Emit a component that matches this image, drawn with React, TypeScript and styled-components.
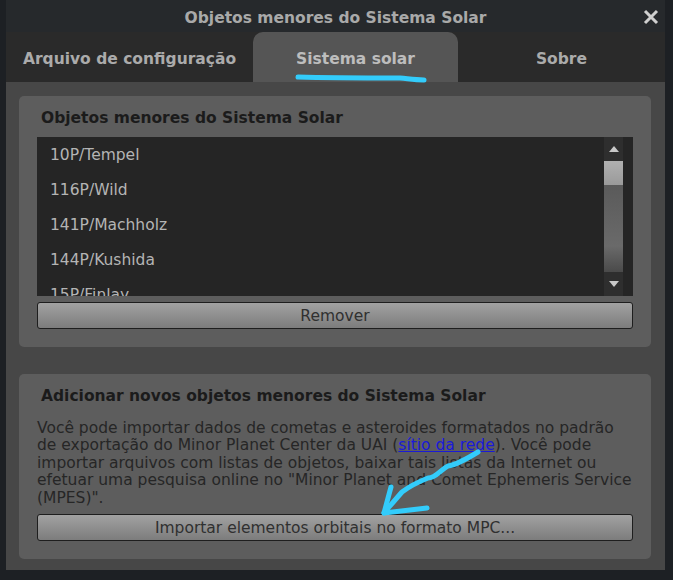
import styled, { createGlobalStyle } from "styled-components";

const GlobalStyle = createGlobalStyle`
  html, body {
    margin: 0;
    padding: 0;
    background: #1d2024;
    font-family: "DejaVu Sans", "Liberation Sans", sans-serif;
  }
`;

const Page = styled.div`
  position: relative;
  width: 673px;
  height: 580px;
  overflow: hidden;
`;

const Dialog = styled.div`
  margin-left: 6px;
  width: 659px;
  height: 570px;
  display: flex;
  flex-direction: column;
  background: #474747;
`;

const TitleBar = styled.div`
  height: 32px;
  padding-top: 4px;
  box-sizing: border-box;
  display: flex;
  align-items: center;
  justify-content: center;
  position: relative;
  background: #26292c;
  color: #a9a9a9;
  font-size: 15.5px;
  font-weight: bold;
`;

const Close = styled.div`
  position: absolute;
  right: 6px;
  top: 9px;
  width: 16px;
  height: 16px;
`;

const Tabs = styled.div`
  height: 50px;
  display: grid;
  grid-template-columns: 247px 205px 1fr;
  background: #2a2a2a;
`;

const Tab = styled.div<{ $active?: boolean }>`
  display: flex;
  align-items: center;
  justify-content: center;
  padding-top: 5px;
  border-radius: 10px 10px 0 0;
  background: ${(p) => (p.$active ? "#555555" : "transparent")};
  color: ${(p) => (p.$active ? "#bdbdbd" : "#ababab")};
  font-size: 15.5px;
  font-weight: bold;
`;

const Content = styled.div`
  flex: 1;
  display: flex;
  flex-direction: column;
  gap: 27px;
  padding: 14px 14px 11px 13px;
`;

const Group = styled.div`
  background: #5d5d5d;
  border-radius: 5px;
  padding: 12px 18px 18px 18px;
  display: flex;
  flex-direction: column;
`;

const GroupTitle = styled.div`
  height: 20px;
  line-height: 20px;
  padding-left: 4px;
  font-size: 15.5px;
  font-weight: bold;
  color: #1b1b1b;
`;

const List = styled.div`
  margin-top: 9px;
  height: 159px;
  background: #252525;
  display: flex;
  overflow: hidden;
`;

const Items = styled.div`
  flex: 1;
  padding: 1px 0 0 13px;
`;

const Item = styled.div`
  height: 35px;
  line-height: 35px;
  font-size: 15.5px;
  color: #b4b4b4;
  white-space: nowrap;
`;

const ScrollBar = styled.div`
  width: 19px;
  margin-right: 10px;
  display: flex;
  flex-direction: column;
  background: #2e2e2e;
`;

const Arrow = styled.div`
  height: 24px;
  display: flex;
  align-items: center;
  justify-content: center;
`;

const Thumb = styled.div`
  height: 24px;
  background: linear-gradient(#b0b0b0, #9a9a9a);
`;

const Track = styled.div`
  flex: 1;
  background: linear-gradient(#5a5a5a, #6a6a6a 70%, #4a4a4a);
`;

const Button = styled.div<{ $top: number }>`
  margin-top: ${(p) => p.$top}px;
  height: 24px;
  box-sizing: content-box;
  padding-top: 1px;
  border: 1px solid #1e1e1e;
  border-radius: 3px;
  background: linear-gradient(#a2a2a2, #7c7c7c);
  color: #303030;
  font-size: 15.5px;
  display: flex;
  align-items: center;
  justify-content: center;
`;

const Paragraph = styled.p`
  margin: 14px 0 0 0;
  font-size: 15.5px;
  line-height: 17.5px;
  color: #262626;
`;

const Link = styled.a`
  color: #1a1ad8;
  text-decoration: underline;
`;

const Annotation = styled.svg`
  position: absolute;
  left: 0;
  top: 0;
  pointer-events: none;
`;

const items = ["10P/Tempel", "116P/Wild", "141P/Machholz", "144P/Kushida", "15P/Finlay"];

export default function App() {
  return (
    <Page>
      <GlobalStyle />
      <Dialog>
        <TitleBar>
          Objetos menores do Sistema Solar
          <Close>
            <svg width="16" height="16" viewBox="0 0 16 16">
              <path d="M2 2 L14 14 M14 2 L2 14" stroke="#cfcfcf" strokeWidth="3" />
            </svg>
          </Close>
        </TitleBar>
        <Tabs>
          <Tab>Arquivo de configuração</Tab>
          <Tab $active>Sistema solar</Tab>
          <Tab>Sobre</Tab>
        </Tabs>
        <Content>
          <Group>
            <GroupTitle>Objetos menores do Sistema Solar</GroupTitle>
            <List>
              <Items>
                {items.map((it) => (
                  <Item key={it}>{it}</Item>
                ))}
              </Items>
              <ScrollBar>
                <Arrow>
                  <svg width="10" height="6" viewBox="0 0 10 6">
                    <path d="M0 6 L5 0 L10 6 Z" fill="#c8c8c8" />
                  </svg>
                </Arrow>
                <Thumb />
                <Track />
                <Arrow>
                  <svg width="10" height="6" viewBox="0 0 10 6">
                    <path d="M0 0 L10 0 L5 6 Z" fill="#c8c8c8" />
                  </svg>
                </Arrow>
              </ScrollBar>
            </List>
            <Button $top={6}>Remover</Button>
          </Group>
          <Group>
            <GroupTitle>Adicionar novos objetos menores do Sistema Solar</GroupTitle>
            <Paragraph>
              Você pode importar dados de cometas e asteroides formatados no padrão de exportação do
              Minor Planet Center da UAI (<Link>sítio da rede</Link>). Você pode importar arquivos com
              listas de objetos, baixar tais listas da Internet ou efetuar uma pesquisa online no
              "Minor Planet and Comet Ephemeris Service (MPES)".
            </Paragraph>
            <Button $top={7}>Importar elementos orbitais no formato MPC...</Button>
          </Group>
        </Content>
      </Dialog>
      <Annotation width="673" height="580" viewBox="0 0 673 580">
        <g stroke="#33ccfb" strokeWidth="5" strokeLinecap="round" fill="none" strokeLinejoin="round">
          <path d="M298 77 C330 78, 360 78, 400 78 C410 79, 415 80, 424 80" />
          <path d="M478 452 C465 460, 455 465, 448 466 C440 470, 436 478, 428 478 C418 482, 410 486, 402 492 C395 500, 390 506, 384 513" />
          <path d="M391 487 L384 513 L427 508" />
        </g>
      </Annotation>
    </Page>
  );
}
